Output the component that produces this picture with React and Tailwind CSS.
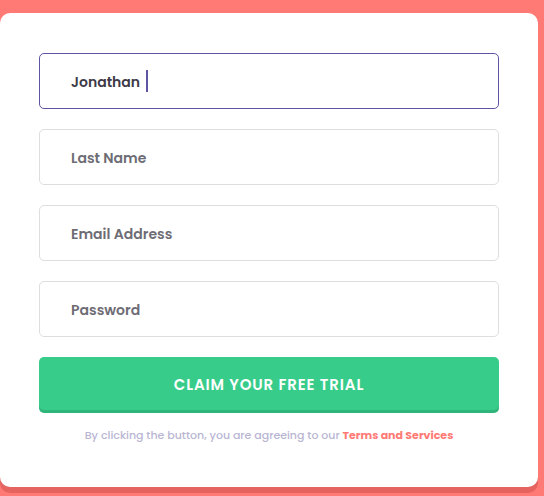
import React from "react";

const font = { fontFamily: "Poppins, Inter, 'Open Sans', sans-serif" };

function Field({ label }) {
  return (
    <div className="h-[56px] rounded-[5px] border border-[#dedede] flex items-center pl-[31px]">
      <span className="text-[14px] font-semibold text-[#6d6c75] translate-y-[1px]">{label}</span>
    </div>
  );
}

export default function App() {
  return (
    <div className="w-[544px] h-[496px] bg-[#ff7a74] overflow-hidden pt-[13px]" style={font}>
      <div className="w-[538px] h-[474px] bg-white rounded-[10px] shadow-[0_6px_0_rgba(180,60,60,0.35)] pl-[39px] pr-[39px] pt-[40px] flex flex-col">
        <div className="flex flex-col gap-[20px]">
          <div className="h-[56px] rounded-[5px] border border-[#5e54a4] flex items-center pl-[31px]">
            <span className="text-[14px] font-semibold text-[#3d3b48] translate-y-[1px]">Jonathan</span>
            <span className="ml-[6px] w-[2px] h-[22px] bg-[#5e54a4]" />
          </div>
          <Field label="Last Name" />
          <Field label="Email Address" />
          <Field label="Password" />
        </div>
        <button className="mt-[20px] h-[53px] rounded-[5px] bg-[#38cc8b] shadow-[0_3px_0_#2fb47a] text-white text-[15px] font-semibold tracking-[0.85px] pt-[4px]">
          CLAIM YOUR FREE TRIAL
        </button>
        <p className="mt-[17px] text-center text-[11px] text-[#b9b6d3] font-medium">
          By clicking the button, you are agreeing to our{" "}
          <span className="font-bold text-[#ff7a74]">Terms and Services</span>
        </p>
      </div>
    </div>
  );
}
